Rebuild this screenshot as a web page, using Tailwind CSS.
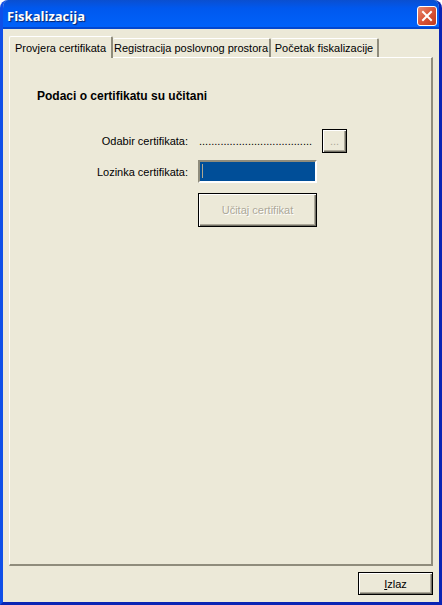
<!DOCTYPE html>
<html lang="hr">
<head>
    <meta charset="UTF-8">
    <meta name="viewport" content="width=device-width, initial-scale=1.0">
    <title>Fiskalizacija</title>
    <script src="https://cdn.jsdelivr.net/npm/@tailwindcss/browser@4"></script>
</head>
<body class="bg-white font-['Liberation_Sans',Arial,sans-serif] text-[11px] leading-[14px] text-black">
    <main class="flex flex-col min-h-screen rounded-t-lg border-x-3 border-b-3 border-l-[#0f4fe8] border-r-[#0a24b4] border-b-[#0a24b4] bg-[#ece9d8] overflow-hidden">
        <!-- Title bar -->
        <header class="-mx-[3px] flex items-center justify-between h-[29px] pl-[7px] pr-[5px] bg-linear-to-b from-[#0a4fd0] via-[#0058ee] via-30% to-[#0062fa] border-b-2 border-[#0347cf]">
            <h1 class="font-['Open_Sans',sans-serif] font-bold text-[13px] leading-[18px] text-white pt-1 [text-shadow:1px_1px_1px_#0a246a]">Fiskalizacija</h1>
            <button type="button" aria-label="Zatvori" class="mt-1 flex items-center justify-center size-5 rounded-[3px] border border-white bg-linear-to-br from-[#e88a70] via-[#d85438] to-[#c03a1c]">
                <svg class="size-3" viewBox="0 0 12 12" fill="none" stroke="#fff" stroke-width="2" stroke-linecap="square">
                    <path d="M2 2 L10 10 M10 2 L2 10"/>
                </svg>
            </button>
        </header>

        <div class="flex flex-col flex-1 px-[6px] pt-[7px] pb-[7px]">
            <!-- Tabs -->
            <div role="tablist" class="flex items-end">
                <button type="button" role="tab" aria-selected="true" class="relative z-10 -mb-px h-[22px] w-[104px] text-center whitespace-nowrap bg-[#ece9d8] border-t border-l border-white border-r-2 border-r-[#8f8c7c] rounded-t-[2px]">Provjera certifikata</button>
                <button type="button" role="tab" aria-selected="false" class="h-[19px] w-[158px] text-center whitespace-nowrap border-t border-white border-r-2 border-r-[#8f8c7c] rounded-t-[2px]">Registracija poslovnog prostora</button>
                <button type="button" role="tab" aria-selected="false" class="h-[19px] w-[108px] text-center whitespace-nowrap border-t border-white border-r-2 border-r-[#8f8c7c] rounded-t-[2px]">Početak fiskalizacije</button>
            </div>

            <!-- Tab page -->
            <section role="tabpanel" class="flex-1 pl-[27px] pt-[31px] border-t border-l border-white border-r-2 border-b-2 border-r-[#8f8c7c] border-b-[#8f8c7c]">
                <h2 class="font-bold text-[12px] leading-[14px]">Podaci o certifikatu su učitani</h2>
                <form class="mt-[26px] grid grid-cols-[151px_119px_25px] gap-x-[10px] items-center">
                    <span class="text-right">Odabir certifikata:</span>
                    <span class="pl-px whitespace-nowrap">.....................................</span>
                    <button type="button" disabled class="h-6 w-[25px] ml-[-5px] border border-black text-[#aca899] shadow-[inset_1px_1px_#fff,inset_-1px_-1px_#716f64,inset_-2px_-2px_#aca899]">...</button>

                    <label for="lozinka" class="mt-[7px] text-right">Lozinka certifikata:</label>
                    <div class="relative mt-[7px]">
                        <input id="lozinka" type="password" class="block h-[23px] w-full px-1 bg-[#004e98] text-white outline-none border-2 border-t-[#8f8c7c] border-l-[#8f8c7c] border-r-white border-b-white">
                        <span class="absolute left-1 top-1 h-[14px] w-px bg-[#b0a890]"></span>
                    </div>
                    <span></span>

                    <button type="button" disabled class="col-start-2 mt-[10px] h-[34px] border border-black text-[#aca899] [text-shadow:1px_1px_#fff] shadow-[inset_1px_1px_#fff,inset_-1px_-1px_#716f64,inset_-2px_-2px_#aca899]">Učitaj certifikat</button>
                </form>
            </section>

            <!-- Footer -->
            <footer class="mt-[6px] flex justify-end">
                <button type="button" class="h-[23px] w-[75px] border border-black shadow-[inset_1px_1px_#fff,inset_-1px_-1px_#716f64,inset_-2px_-2px_#aca899]"><u>I</u>zlaz</button>
            </footer>
        </div>
    </main>
</body>
</html>
